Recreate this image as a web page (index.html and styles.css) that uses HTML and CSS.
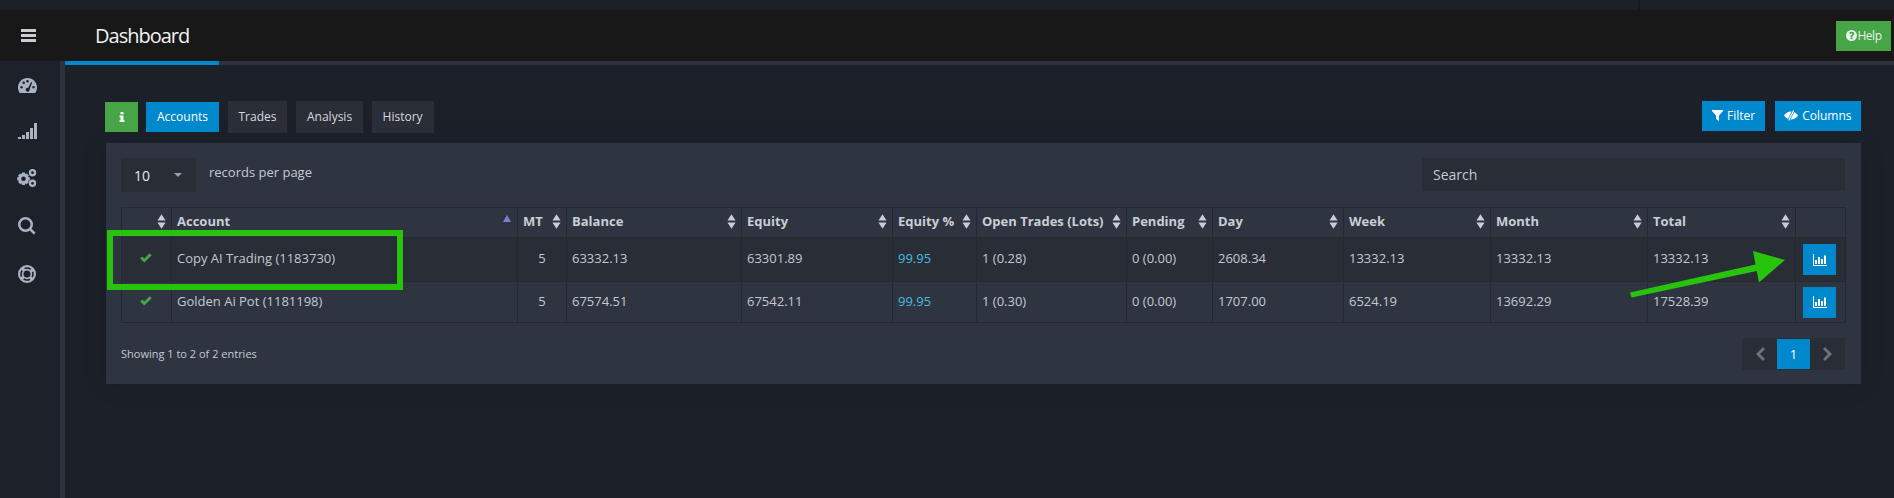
FILE: index.html
```html
<!DOCTYPE html>
<html>
<head>
    <title>Dashboard</title>
    <link rel="stylesheet" href="styles.css">
</head>
<body>
    <!-- shared icons -->
    <svg class="sprite" width="0" height="0">
        <symbol id="sort" viewBox="0 0 10 16">
            <path d="M5 0 L9.5 6.8 H.5Z M.5 9.2 H9.5 L5 16Z"/>
        </symbol>
        <symbol id="check" viewBox="0 0 14 12">
            <path d="M0 6.5 L2.4 4.1 L5 6.7 L11.4 .3 L13.8 2.7 L5 11.5Z"/>
        </symbol>
        <symbol id="chart" viewBox="0 0 14 12">
            <path d="M0 0H1V11H14V12H0Z M2 6H4V10H2Z M5 3H7V10H5Z M8 5H10V10H8Z M11 1.500H13V10H11Z"/>
        </symbol>
    </svg>

    <div class="top-strip"><span class="top-strip-line"></span></div>

    <header class="header">
        <div class="menu-toggle">
            <svg width="15" height="13" viewBox="0 0 15 13"><path d="M0 0H15V3H0Z M0 5H15V8H0Z M0 10H15V13H0Z"/></svg>
        </div>
        <h1 class="page-title">Dashboard</h1>
        <button class="btn btn-green btn-help">
            <svg width="11" height="11" viewBox="0 0 12 12"><path fill-rule="evenodd" d="M6 0a6 6 0 1 0 0 12A6 6 0 0 0 6 0Z M5 8.300H7V10H5Z M5 7.500V6.600C5 5.500 7 5.200 7 4.300 7 3.800 6.500 3.500 6 3.500 5.500 3.500 5 3.800 4.600 4.300L3.400 3.400C4 2.400 5 2 6.100 2 7.600 2 9 2.800 9 4.200 9 5.800 7 6 7 7V7.500Z"/></svg>Help
        </button>
    </header>

    <div class="layout">
        <nav class="sidebar">
            <svg width="19" height="15" viewBox="0 0 19 15"><path fill-rule="evenodd" d="M9.500 0C4.300 0 0 4.200 0 9.500 0 11.300.5 13 1.400 14.400 1.600 14.800 2 15 2.400 15H16.600C17 15 17.400 14.800 17.600 14.400 18.500 13 19 11.300 19 9.500 19 4.200 14.700 0 9.500 0Z M3.500 8A1.300 1.300 0 1 0 3.500 10.600 1.300 1.300 0 0 0 3.500 8Z M5.700 3.500A1.300 1.300 0 1 0 5.700 6.100 1.300 1.300 0 0 0 5.700 3.500Z M9.500 2A1.300 1.300 0 1 0 9.500 4.600 1.300 1.300 0 0 0 9.500 2Z M15.500 8A1.300 1.300 0 1 0 15.500 10.600 1.300 1.300 0 0 0 15.500 8Z M13 4L10.300 9.700C8.900 9.400 7.700 10.400 7.700 11.800 7.700 13 8.700 13.800 9.700 13.800 11 13.800 12 12.500 11.600 11.200L14.200 4.500Z"/></svg>
            <svg width="19" height="16" viewBox="0 0 19 16"><path d="M0 14H3V16H0Z M4 12H7V16H4Z M8 9H11V16H8Z M12 5H15V16H12Z M16 0H19V16H16Z"/></svg>
            <svg width="20" height="18" viewBox="0 0 20 18"><path fill-rule="evenodd" d="M5 3.500H8L8.400 5.200 9.800 4.400 11.900 6.500 11 7.900 12.800 8.300V11.300L11 11.700 11.900 13.100 9.800 15.200 8.400 14.300 8 16H5L4.600 14.300 3.200 15.200 1.100 13.100 2 11.700 .2 11.300V8.300L2 7.900 1.100 6.500 3.200 4.400 4.600 5.200Z M6.500 7.500A2.300 2.300 0 1 0 6.500 12.100 2.300 2.300 0 0 0 6.500 7.500Z"/><path fill-rule="evenodd" d="M15.500 0A3.700 3.700 0 1 0 15.500 7.400 3.700 3.700 0 0 0 15.500 0Z M15.500 2.300A1.400 1.400 0 1 1 15.500 5.100 1.400 1.400 0 0 1 15.500 2.300Z M15.500 10.600A3.700 3.700 0 1 0 15.500 18 3.700 3.700 0 0 0 15.500 10.600Z M15.500 12.900A1.400 1.400 0 1 1 15.500 15.700 1.400 1.400 0 0 1 15.500 12.900Z"/></svg>
            <svg width="18" height="18" viewBox="0 0 18 18"><path fill-rule="evenodd" d="M7.500 0A7.500 7.500 0 1 0 7.500 15 7.500 7.500 0 0 0 7.500 0Z M7.500 2.500A5 5 0 1 1 7.500 12.500 5 5 0 0 1 7.500 2.500Z"/><path d="M11.500 13.300L13.300 11.500 17.600 15.800 15.800 17.600Z"/></svg>
            <svg width="18" height="18" viewBox="0 0 18 18">
                <path fill-rule="evenodd" d="M9 0A9 9 0 1 0 9 18 9 9 0 0 0 9 0Z M9 5.500A3.500 3.500 0 1 1 9 12.500 3.500 3.500 0 0 1 9 5.500Z"/>
                <circle class="ring-gaps" cx="9" cy="9" r="6"/>
            </svg>
        </nav>

        <main class="main">
            <div class="tab-bar"><span class="tab-bar-active"></span></div>

            <div class="content">
                <div class="toolbar">
                    <div class="tabs">
                        <button class="btn btn-green btn-info">
                            <svg width="6" height="10" viewBox="0 0 6 10"><path d="M1.500 0H4.500V2.200H1.500Z M.5 3.500H4.500V8.300H5.500V10H.5V8.300H1.500V5.200H.5Z"/></svg>
                        </button>
                        <button class="btn btn-blue tab-active">Accounts</button>
                        <button class="btn tab">Trades</button>
                        <button class="btn tab">Analysis</button>
                        <button class="btn tab">History</button>
                    </div>
                    <div class="actions">
                        <button class="btn btn-blue">
                            <svg width="11" height="11" viewBox="0 0 11 11"><path d="M0 0H11V1L7 5.500V11L4 9V5.500L0 1Z"/></svg>
                            Filter
                        </button>
                        <button class="btn btn-blue">
                            <svg width="14" height="11" viewBox="0 0 14 11">
                                <path d="M7 1.500C3.800 1.500 1.300 3.500 0 5.500 1.300 7.500 3.800 9.500 7 9.500 10.200 9.500 12.700 7.500 14 5.500 12.700 3.500 10.200 1.500 7 1.500Z"/>
                                <path class="slash-gap" d="M4.500 11L9.800 0"/>
                                <path class="slash" d="M4.800 10.500L9.600 .5"/>
                            </svg>
                            Columns
                        </button>
                    </div>
                </div>

                <section class="panel">
                    <div class="panel-top">
                        <div class="length">
                            <div class="select">10<span class="caret"></span></div>
                            <span class="length-label">records per page</span>
                        </div>
                        <input class="search" placeholder="Search">
                    </div>

                    <table class="accounts">
                        <colgroup>
                            <col style="width:50px"><col style="width:346px"><col style="width:49px"><col style="width:175px">
                            <col style="width:151px"><col style="width:84px"><col style="width:150px"><col style="width:86px">
                            <col style="width:131px"><col style="width:147px"><col style="width:157px"><col style="width:148px"><col style="width:50px">
                        </colgroup>
                        <thead>
                            <tr>
                                <th><div class="th-inner"><span></span><svg class="sort"><use href="#sort"/></svg></div></th>
                                <th><div class="th-inner">Account<span class="sort-up"></span></div></th>
                                <th><div class="th-inner">MT<svg class="sort"><use href="#sort"/></svg></div></th>
                                <th><div class="th-inner">Balance<svg class="sort"><use href="#sort"/></svg></div></th>
                                <th><div class="th-inner">Equity<svg class="sort"><use href="#sort"/></svg></div></th>
                                <th><div class="th-inner">Equity %<svg class="sort"><use href="#sort"/></svg></div></th>
                                <th><div class="th-inner">Open Trades (Lots)<svg class="sort"><use href="#sort"/></svg></div></th>
                                <th><div class="th-inner">Pending<svg class="sort"><use href="#sort"/></svg></div></th>
                                <th><div class="th-inner">Day<svg class="sort"><use href="#sort"/></svg></div></th>
                                <th><div class="th-inner">Week<svg class="sort"><use href="#sort"/></svg></div></th>
                                <th><div class="th-inner">Month<svg class="sort"><use href="#sort"/></svg></div></th>
                                <th><div class="th-inner">Total<svg class="sort"><use href="#sort"/></svg></div></th>
                                <th></th>
                            </tr>
                        </thead>
                        <tbody>
                            <tr class="row-dark">
                                <td class="status"><svg class="check"><use href="#check"/></svg></td>
                                <td>Copy AI Trading (1183730)</td>
                                <td class="mt">5</td>
                                <td>63332.13</td>
                                <td>63301.89</td>
                                <td class="pct">99.95</td>
                                <td>1 (0.28)</td>
                                <td>0 (0.00)</td>
                                <td>2608.34</td>
                                <td>13332.13</td>
                                <td>13332.13</td>
                                <td>13332.13</td>
                                <td class="cell-btn"><button class="btn btn-blue btn-chart"><svg class="chart"><use href="#chart"/></svg></button></td>
                            </tr>
                            <tr>
                                <td class="status"><svg class="check"><use href="#check"/></svg></td>
                                <td>Golden Ai Pot (1181198)</td>
                                <td class="mt">5</td>
                                <td>67574.51</td>
                                <td>67542.11</td>
                                <td class="pct">99.95</td>
                                <td>1 (0.30)</td>
                                <td>0 (0.00)</td>
                                <td>1707.00</td>
                                <td>6524.19</td>
                                <td>13692.29</td>
                                <td>17528.39</td>
                                <td class="cell-btn"><button class="btn btn-blue btn-chart"><svg class="chart"><use href="#chart"/></svg></button></td>
                            </tr>
                        </tbody>
                    </table>

                    <div class="panel-bottom">
                        <span class="info-text">Showing 1 to 2 of 2 entries</span>
                        <div class="pagination">
                            <span class="page-arrow"><svg width="9" height="14" viewBox="0 0 9 14"><path d="M7 0L9 2 4 7 9 12 7 14 0 7Z"/></svg></span>
                            <span class="page-current">1</span>
                            <span class="page-arrow"><svg width="9" height="14" viewBox="0 0 9 14"><path d="M2 0L9 7 2 14 0 12 5 7 0 2Z"/></svg></span>
                        </div>
                    </div>
                </section>
            </div>
        </main>
    </div>

    <!-- green annotations drawn on top of the screenshot -->
    <div class="mark-box"></div>
    <svg class="mark-arrow" width="170" height="50" viewBox="0 0 170 50">
        <path d="M0 41.500L125.500 13.500 123 0 155 9 129 31.500 126.800 20 1.500 46.500Z"/>
    </svg>
</body>
</html>
```

FILE: styles.css
```css
* {
    box-sizing: border-box;
}

html, body {
    height: 100%;
}

body {
    display: flex;
    flex-direction: column;
    margin: 0;
    overflow: hidden;
    background-color: #1c2029;
    color: #c4c9d1;
    font-family: "Open Sans", sans-serif;
    font-size: 13px;
}

.sprite {
    position: absolute;
}

svg {
    fill: currentColor;
    display: block;
}

.top-strip {
    height: 10px;
    flex: none;
    padding-left: 1638px;
}

.top-strip-line {
    display: block;
    width: 2px;
    height: 10px;
    background-color: #15181e;
}

.header {
    display: flex;
    align-items: center;
    height: 51px;
    flex: none;
    background-color: #181818;
    color: #fff;
    padding-right: 3px;
}

.menu-toggle {
    width: 56px;
    display: flex;
    justify-content: center;
    color: #c9cdd3;
}

.page-title {
    flex: 1;
    margin: 0 0 0 39px;
    font-size: 20px;
    font-weight: 400;
    letter-spacing: -1px;
    color: #f2f2f2;
}

.layout {
    flex: 1;
    display: flex;
    min-height: 0;
}

.sidebar {
    width: 65px;
    flex: none;
    display: flex;
    flex-direction: column;
    align-items: center;
    gap: 30px;
    padding: 17px 6px 0 0;
    border-right: 5px solid #2d323c;
    background-color: #1d212a;
    color: #a9b3c2;
}

.ring-gaps {
    fill: none;
    stroke: #1d212a;
    stroke-width: 1.6;
    stroke-dasharray: 6.5 2.925;
    stroke-dashoffset: 3.25;
}

.main {
    flex: 1;
    min-width: 0;
}

.tab-bar {
    height: 4px;
    background-color: #2d323c;
}

.tab-bar-active {
    display: block;
    width: 154px;
    height: 4px;
    background-color: #0088cc;
}

.content {
    padding: 36px 33px 0 40px;
}

.toolbar {
    display: flex;
    justify-content: space-between;
    align-items: flex-start;
}

.tabs {
    display: flex;
    gap: 8px;
}

.actions {
    display: flex;
    gap: 10px;
}

.actions .btn {
    padding: 0 9.5px 2px;
}

.actions svg {
    margin-right: 4px;
}

.slash-gap {
    fill: none;
    stroke: #0088cc;
    stroke-width: 2.6;
}

.slash {
    fill: none;
    stroke: currentColor;
    stroke-width: 1.2;
}

.btn {
    display: inline-flex;
    align-items: center;
    justify-content: center;
    height: 30px;
    padding: 0 11px 2px;
    border: none;
    border-radius: 0;
    color: #fff;
    font-family: inherit;
    font-size: 12px;
}

.btn-blue {
    background-color: #0088cc;
}

.btn-green {
    background-color: #47a447;
}

.btn-help {
    width: 55px;
    height: 30px;
    padding: 0;
    flex: none;
    color: #e8f2e8;
    letter-spacing: -0.5px;
}

.btn-help svg {
    margin-right: 1px;
}

.btn-info {
    width: 33px;
    margin-top: 1px;
    padding: 0;
}

.tab-active {
    width: 73px;
    margin-top: 1px;
}

.tab {
    height: 32px;
    margin-left: 0.5px;
    background-color: #2a2e37;
    color: #d5d9df;
}

.panel {
    margin: 10px 0 0 1px;
    height: 241px;
    padding: 15px 16px 0 15px;
    background-color: #2f3540;
    box-shadow: 0 0 24px rgba(0, 0, 0, 0.12);
}

.panel-top {
    display: flex;
    justify-content: space-between;
    height: 49px;
}

.length {
    display: flex;
    align-items: flex-start;
}

.select {
    display: flex;
    align-items: center;
    justify-content: space-between;
    width: 75px;
    height: 34px;
    padding: 0 14px 0 13px;
    background-color: #292d36;
    color: #e4e6ea;
    font-size: 14px;
}

.caret {
    border-left: 4px solid transparent;
    border-right: 4px solid transparent;
    border-top: 4px solid #9aa0a9;
}

.length-label {
    margin: 5px 0 0 13px;
}

.search {
    width: 423px;
    height: 33px;
    padding: 0 11px;
    border: none;
    background-color: #292d36;
    font-family: inherit;
    font-size: 14px;
}

.search::placeholder {
    color: #c4c9d1;
    opacity: 1;
}

.accounts {
    width: 1724px;
    table-layout: fixed;
    border-collapse: collapse;
}

.accounts th, .accounts td {
    border: 1px solid #242831;
    padding: 0 5px 3px;
    text-align: left;
    white-space: nowrap;
    overflow: hidden;
}

.accounts th {
    height: 30px;
    color: #c9ced6;
    font-weight: 700;
}

.accounts td {
    height: 41px;
}

.accounts .row-dark td {
    height: 44px;
    background-color: #292d36;
}

.th-inner {
    display: flex;
    justify-content: space-between;
    align-items: center;
}

.sort {
    width: 9px;
    height: 15px;
    flex: none;
    color: #c9ced6;
}

.sort-up {
    width: 0;
    height: 0;
    margin: 0 1px 6px 0;
    border-left: 4px solid transparent;
    border-right: 4px solid transparent;
    border-bottom: 7px solid #7a7fd6;
}

.status {
    text-align: center;
}

.accounts td.status {
    padding-right: 7px;
}

.check {
    width: 12px;
    height: 10px;
    margin: 0 auto;
    color: #47a447;
}

.accounts td.mt {
    text-align: center;
}

.accounts td.pct {
    color: #45bde0;
}

.accounts td.cell-btn {
    padding: 0 7px;
}

.btn-chart {
    width: 33px;
    height: 31px;
    padding: 0;
}

.chart {
    width: 14px;
    height: 12px;
}

.panel-bottom {
    display: flex;
    justify-content: space-between;
    align-items: center;
    margin-top: 15px;
}

.info-text {
    font-size: 11px;
    padding-bottom: 2px;
}

.pagination {
    display: flex;
    height: 32px;
    border: 1px solid #292d36;
    background-color: #292d36;
}

.page-arrow {
    display: flex;
    align-items: center;
    justify-content: center;
    width: 34px;
    color: #6c717a;
}

.page-current {
    display: flex;
    align-items: center;
    justify-content: center;
    width: 33px;
    background-color: #0088cc;
    color: #fff;
}

/* annotations */
.mark-box {
    position: absolute;
    left: 107px;
    top: 230px;
    width: 296px;
    height: 60px;
    border: 6px solid #28c30c;
}

.mark-arrow {
    position: absolute;
    left: 1630px;
    top: 251px;
    fill: #28c30c;
}
```
